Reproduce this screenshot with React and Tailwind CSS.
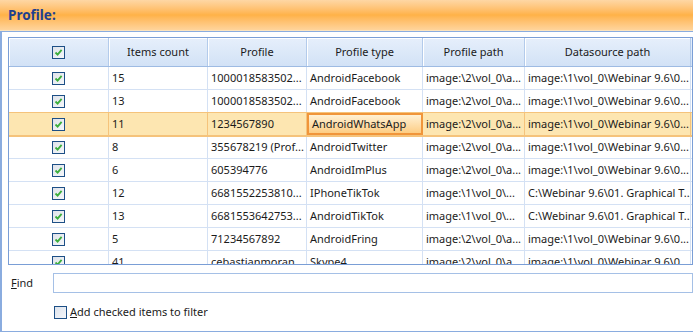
import React from "react";

const rows = [
    ["15", "1000018583502...", "AndroidFacebook", "image:\\2\\vol_0\\a...", "image:\\1\\vol_0\\Webinar 9.6\\0..."],
    ["13", "1000018583502...", "AndroidFacebook", "image:\\2\\vol_0\\a...", "image:\\1\\vol_0\\Webinar 9.6\\0..."],
    ["11", "1234567890", "AndroidWhatsApp", "image:\\2\\vol_0\\a...", "image:\\1\\vol_0\\Webinar 9.6\\0..."],
    ["8", "355678219  (Prof...", "AndroidTwitter", "image:\\2\\vol_0\\a...", "image:\\1\\vol_0\\Webinar 9.6\\0..."],
    ["6", "605394776", "AndroidImPlus", "image:\\2\\vol_0\\a...", "image:\\1\\vol_0\\Webinar 9.6\\0..."],
    ["12", "6681552253810...", "IPhoneTikTok", "image:\\1\\vol_0\\...", "C:\\Webinar 9.6\\01. Graphical T..."],
    ["13", "6681553642753...", "AndroidTikTok", "image:\\1\\vol_0\\...", "C:\\Webinar 9.6\\01. Graphical T..."],
    ["5", "71234567892", "AndroidFring", "image:\\2\\vol_0\\a...", "image:\\1\\vol_0\\Webinar 9.6\\0..."],
    ["41", "cebastianmoran...", "Skype4", "image:\\2\\vol_0\\a...", "image:\\1\\vol_0\\Webinar 9.6\\0..."],
];

const widths = ["w-[100px]", "w-[99px]", "w-[99px]", "w-[116px]", "w-[102px]", "w-[166px]"];

function Check({ checked = true }) {
    return (
        <span className="inline-flex items-center justify-center w-[13px] h-[13px] border border-[#1d4f86] bg-gradient-to-br from-[#dfe3ea] to-[#f5f7fa]">
            {checked && (
                <svg width="9" height="9" viewBox="0 0 9 9">
                    <path d="M1.5 4.5 L3.6 6.6 L7.6 1.8" fill="none" stroke="#3cae3c" strokeWidth="1.8" />
                </svg>
            )}
        </span>
    );
}

export default function App() {
    return (
        <div className="w-[693px] h-[332px] bg-white overflow-hidden text-[11px] text-[#1b1b1b]" style={{ fontFamily: "'Noto Sans', 'Open Sans', sans-serif" }}>
            <div className="h-[31px] flex items-center pl-[8px] bg-gradient-to-b from-[#fed7a4] via-[#ffb247] to-[#ffd49b] border-b border-[#fbe3bd]">
                <span className="font-bold text-[#1e3f8e] text-[13.5px]">Profile:</span>
            </div>
            <div className="h-[301px] border-l-2 border-t border-b border-[#8aacdf] pl-[6px] pt-[5px]">
                <div className="h-[228px] border border-[#7a9ed6] overflow-hidden">
                    <div className="flex h-[29px] bg-gradient-to-b from-[#e6effb] to-[#d2e2f6] border-b border-[#9ebbe3]">
                        {["", "Items count", "Profile", "Profile type", "Profile path", "Datasource path"].map((h, i) => (
                            <div key={i} className={`${widths[i]} shrink-0 flex items-center justify-center border-r border-[#b3cbeb] shadow-[inset_1px_1px_0_#ffffff]`}>
                                {i === 0 ? <Check /> : h}
                            </div>
                        ))}
                    </div>
                    {rows.map((r, ri) => {
                        const sel = ri === 2;
                        return (
                            <div key={ri} className={`flex h-[23px] border-b ${sel ? "bg-[#fde6b1] border-[#f5c37b] outline outline-1 outline-[#f5c37b]" : "border-[#d4e1f4]"}`}>
                                <div className={`${widths[0]} shrink-0 flex items-center justify-center border-r ${sel ? "border-[#f5c37b]" : "border-[#d4e1f4]"}`}>
                                    <Check />
                                </div>
                                {r.map((c, ci) => (
                                    <div
                                        key={ci}
                                        className={`${widths[ci + 1]} shrink-0 flex items-center pl-[3px] whitespace-nowrap overflow-hidden ${sel && ci === 2 ? "border-2 border-[#f0953a] bg-gradient-to-b from-[#fff1d4] to-[#fdcd83]" : sel ? "border-r border-[#f5c37b]" : "border-r border-[#d4e1f4]"}`}
                                    >
                                        {c}
                                    </div>
                                ))}
                            </div>
                        );
                    })}
                </div>
                <div className="flex items-center mt-[8px] h-[20px]">
                    <label className="w-[45px] pl-[3px]"><span className="underline">F</span>ind</label>
                    <input className="flex-1 h-[20px] border border-[#a5c0e6] outline-none" />
                </div>
                <div className="flex items-center mt-[11px] ml-[46px] gap-[3px]">
                    <span className="inline-block w-[13px] h-[13px] border border-[#1d4f86] bg-gradient-to-br from-[#dde3ec] to-[#f4f6fa]" />
                    <span><span className="underline">A</span>dd checked items to filter</span>
                </div>
            </div>
        </div>
    );
}
